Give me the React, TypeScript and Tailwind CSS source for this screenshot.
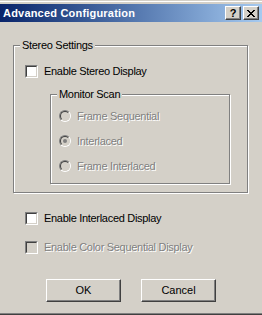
const font = { fontFamily: '"Liberation Sans", Arial, sans-serif' }

const Checkbox = ({ label, disabled }: { label: string; disabled?: boolean }) => (
  <div className="flex h-[13px] items-center gap-[6px]">
    <span className="box-border block h-[13px] w-[13px] border border-t-[#808080] border-l-[#808080] border-r-white border-b-white">
      <span
        className={`box-border block h-[11px] w-[11px] border border-t-[#404040] border-l-[#404040] border-r-[#D4D0C8] border-b-[#D4D0C8] ${
          disabled ? 'bg-[#D4D0C8]' : 'bg-white'
        }`}
      />
    </span>
    <span
      className={`text-[11px] leading-[13px] tracking-[-0.3px] ${
        disabled ? 'text-[#808080] [text-shadow:1px_1px_0_#fff]' : 'text-black'
      }`}
    >
      {label}
    </span>
  </div>
)

const Radio = ({ label, checked }: { label: string; checked?: boolean }) => (
  <div className="flex h-[12px] items-center gap-[6px]">
    <span className="box-border flex h-[12px] w-[12px] rounded-full border border-t-[#808080] border-l-[#808080] border-r-white border-b-white">
      <span className="box-border flex h-[10px] w-[10px] items-center justify-center rounded-full border border-t-[#404040] border-l-[#404040] border-r-[#D4D0C8] border-b-[#D4D0C8] bg-[#D4D0C8]">
        {checked && <span className="block h-[4px] w-[4px] rounded-full bg-[#808080]" />}
      </span>
    </span>
    <span className="text-[11px] leading-[13px] tracking-[-0.3px] text-[#808080] [text-shadow:1px_1px_0_#fff]">
      {label}
    </span>
  </div>
)

const GroupLabel = ({ children }: { children: string }) => (
  <span className="absolute -top-[7px] left-[6px] bg-[#D4D0C8] px-[2px] text-[11px] leading-[13px] tracking-[-0.3px] text-black">
    {children}
  </span>
)

const Button = ({ children }: { children: string }) => (
  <button className="box-border flex h-[23px] w-[75px] items-center justify-center border border-t-white border-l-white border-r-[#404040] border-b-[#404040] bg-[#D4D0C8] text-[11px] leading-[13px] text-black shadow-[inset_-1px_-1px_0_#808080]">
    {children}
  </button>
)

const CaptionButton = ({ children }: { children: React.ReactNode }) => (
  <span className="box-border flex h-[14px] w-[16px] items-center justify-center border border-t-white border-l-white border-r-[#404040] border-b-[#404040] bg-[#D4D0C8] shadow-[inset_-1px_-1px_0_#808080]">
    {children}
  </span>
)

export default function App() {
  return (
    <div className="box-border flex h-[315px] w-[262px] flex-col overflow-hidden bg-[#D4D0C8]" style={font}>
      <div className="h-[1px] bg-[#D4D0C8]" />
      <div className="h-[1px] bg-white" />
      <div className="h-[2px] bg-[#D4D0C8]" />

      {/* title bar */}
      <div className="flex h-[18px] items-center bg-gradient-to-r from-[#0A246A] to-[#A6CAF0] pl-[3px] pr-[3px]">
        <span className="flex-1 text-[11px] font-bold leading-[13px] tracking-[0.2px] text-white">
          Advanced Configuration
        </span>
        <div className="flex gap-[2px]">
          <CaptionButton>
            <span className="text-[11px] font-bold leading-[11px] text-black">?</span>
          </CaptionButton>
          <CaptionButton>
            <svg width="8" height="7" viewBox="0 0 8 7" shapeRendering="crispEdges">
              <path
                d="M0 0h2v1h-2zM6 0h2v1h-2zM1 1h2v1h-2zM5 1h2v1h-2zM2 2h4v1h-4zM3 3h2v1h-2zM2 4h4v1h-4zM1 5h2v1h-2zM5 5h2v1h-2zM0 6h2v1h-2zM6 6h2v1h-2z"
                fill="#000"
              />
            </svg>
          </CaptionButton>
        </div>
      </div>

      {/* Stereo Settings */}
      <div className="relative mt-[23px] ml-[13px] box-border h-[148px] w-[235px] border border-[#808080] shadow-[inset_1px_1px_0_#fff,1px_1px_0_#fff]">
        <GroupLabel>Stereo Settings</GroupLabel>
        <div className="flex flex-col pt-[19px] pl-[11px]">
          <Checkbox label="Enable Stereo Display" />
          <div className="relative mt-[16px] ml-[25px] box-border h-[90px] w-[180px] border border-[#808080] shadow-[inset_1px_1px_0_#fff,1px_1px_0_#fff]">
            <GroupLabel>Monitor Scan</GroupLabel>
            <div className="flex flex-col gap-[13px] pt-[15px] pl-[8px]">
              <Radio label="Frame Sequential" />
              <Radio label="Interlaced" checked />
              <Radio label="Frame Interlaced" />
            </div>
          </div>
        </div>
      </div>

      <div className="mt-[19px] flex flex-col gap-[16px] pl-[25px]">
        <Checkbox label="Enable Interlaced Display" />
        <Checkbox label="Enable Color Sequential Display" disabled />
      </div>

      <div className="mt-[25px] flex justify-center gap-[20px]">
        <Button>OK</Button>
        <Button>Cancel</Button>
      </div>

      <div className="mt-auto h-[1px] bg-[#808080]" />
      <div className="h-[1px] bg-[#404040]" />
    </div>
  )
}
